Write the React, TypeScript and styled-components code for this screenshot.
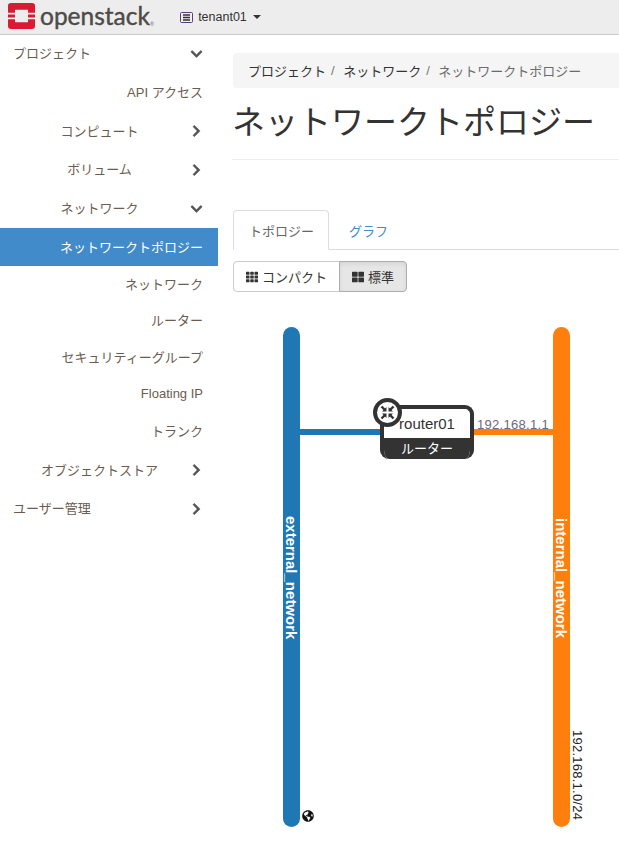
import React from 'react';
import styled, {createGlobalStyle} from 'styled-components';
import {FaChevronDown, FaChevronRight, FaGlobeAmericas, FaTh, FaThLarge} from 'react-icons/fa';

const GlobalStyle = createGlobalStyle`
  html, body {
    margin: 0;
    padding: 0;
    background: #fff;
    overflow: hidden;
  }
  body {
    font-family: "Liberation Sans", "Noto Sans CJK JP", sans-serif;
    font-size: 13px;
    color: #333;
  }
`;

const Page = styled.div`
  width: 619px;
  height: 841px;
  overflow: hidden;
`;

const Navbar = styled.header`
  height: 34px;
  background: #ededed;
  border-bottom: 1px solid #ccc;
  display: flex;
  align-items: center;
  padding-left: 8px;
`;

const LogoIcon = styled.svg`
  margin-bottom: 2px;
`;

const LogoText = styled.span`
  font-family: "Lato", sans-serif;
  font-size: 24.5px;
  color: #4d4a48;
  margin-left: 5px;
  -webkit-text-stroke: 0.4px #4d4a48;
  line-height: 30px;
  padding-bottom: 4px;
`;

const LogoMark = styled.sup`
  font-size: 5px;
  position: relative;
  top: 10px;
  color: #777;
  -webkit-text-stroke: 0;
`;

const Tenant = styled.div`
  display: flex;
  align-items: center;
  margin-left: 26px;
  font-size: 12.5px;
  color: #333;
  gap: 5px;
`;

const Caret = styled.span`
  width: 0;
  height: 0;
  margin-left: 1px;
  border-top: 4px solid #333;
  border-left: 4px solid transparent;
  border-right: 4px solid transparent;
`;

const Body = styled.div`
  display: flex;
`;

const Sidebar = styled.nav`
  width: 218px;
  flex: none;
  margin-top: -1px;
`;

const NavRow = styled.a<{$level: 1 | 2 | 3; $active?: boolean; $h: number}>`
  display: flex;
  align-items: center;
  height: ${p => p.$h}px;
  box-sizing: border-box;
  font-size: 13px;
  color: ${p => (p.$active ? '#fff' : '#6b5c4f')};
  background: ${p => (p.$active ? '#428bca' : 'transparent')};
  position: relative;
  justify-content: ${p => (p.$level === 1 ? 'flex-start' : p.$level === 2 ? 'center' : 'flex-end')};
  padding-bottom: 2px;
  padding-left: ${p => (p.$level === 1 ? '13px' : '0')};
  padding-right: ${p => (p.$level === 1 ? '0' : p.$level === 2 ? '19px' : '15px')};
`;

const Chevron = styled.span`
  position: absolute;
  left: 188px;
  width: 16px;
  top: 50%;
  transform: translateY(-50%);
  display: flex;
  justify-content: center;
  font-size: 13px;
  color: #555;
  svg {
    stroke: currentColor;
    stroke-width: 20px;
  }
`;

const Content = styled.main`
  flex: 1;
  min-width: 0;
  padding: 18px 0 0 15px;
`;

const Breadcrumb = styled.ol`
  list-style: none;
  margin: 0;
  height: 35px;
  padding: 0 0 0 15px;
  background: #f5f5f5;
  border-radius: 4px 0 0 4px;
  display: flex;
  align-items: center;
  font-size: 13px;
  color: #333;
  gap: 5px;
  white-space: nowrap;
`;

const CrumbSep = styled.span`
  color: #777;
  margin-right: 3.5px;
`;

const CrumbLast = styled.li`
  color: #6b6b6b;
`;

const Title = styled.h1`
  margin: 13px 0 0 -1px;
  font-size: 33px;
  font-weight: 400;
  line-height: 43px;
  height: 58px;
  border-bottom: 1px solid #eee;
  color: #333;
  white-space: nowrap;
`;

const Tabs = styled.ul`
  list-style: none;
  margin: 50px 0 0;
  padding: 0;
  display: flex;
  gap: 4px;
  height: 40px;
  box-sizing: border-box;
  border-bottom: 1px solid #ddd;
`;

const Tab = styled.li<{$active?: boolean}>`
  height: 40px;
  box-sizing: border-box;
  display: flex;
  align-items: center;
  padding: 0 ${p => (p.$active ? '14px' : '15px')} 0 15px;
  font-size: 13px;
  border-radius: 4px 4px 0 0;
  color: ${p => (p.$active ? '#666' : '#428bca')};
  background: ${p => (p.$active ? '#fff' : 'transparent')};
  border: 1px solid ${p => (p.$active ? '#ddd' : 'transparent')};
  border-bottom-color: ${p => (p.$active ? '#fff' : 'transparent')};
`;

const ButtonGroup = styled.div`
  display: flex;
  margin-top: 11px;
  height: 31px;
`;

const ToggleButton = styled.button<{$on?: boolean}>`
  height: 31px;
  box-sizing: border-box;
  display: flex;
  align-items: center;
  gap: 4px;
  padding: 0 12px 0 12px;
  font: inherit;
  font-size: 13px;
  color: #333;
  background: ${p => (p.$on ? '#e6e6e6' : '#fff')};
  border: 1px solid ${p => (p.$on ? '#adadad' : '#ccc')};
  box-shadow: ${p => (p.$on ? 'inset 0 2px 4px rgba(0,0,0,.08)' : 'none')};
  border-radius: ${p => (p.$on ? '0 4px 4px 0' : '4px 0 0 4px')};
  margin-left: ${p => (p.$on ? '-1px' : '0')};
  svg {
    font-size: 12px;
  }
`;

const Canvas = styled.div`
  position: relative;
  height: 549px;
`;

const NetworkBar = styled.div<{$color: string; $left: number}>`
  position: absolute;
  left: ${p => p.$left}px;
  top: 35px;
  width: 17px;
  height: 500px;
  border-radius: 9px;
  background: ${p => p.$color};
`;

const NetworkName = styled.span<{$top: number}>`
  position: absolute;
  left: 50%;
  top: ${p => p.$top}px;
  writing-mode: vertical-rl;
  transform: translateX(-50%);
  font-size: 15px;
  font-weight: 700;
  color: #fff;
  white-space: nowrap;
  line-height: 17px;
`;

const Link = styled.div<{$color: string; $left: number; $width: number}>`
  position: absolute;
  left: ${p => p.$left}px;
  width: ${p => p.$width}px;
  top: 137px;
  height: 6px;
  background: ${p => p.$color};
`;

const LinkLabel = styled.span`
  position: absolute;
  left: 244px;
  top: 125px;
  font-size: 13px;
  letter-spacing: 0.3px;
  color: #6a6a78;
  white-space: nowrap;
`;

const CidrLabel = styled.span`
  position: absolute;
  left: 337px;
  top: 438px;
  writing-mode: vertical-rl;
  font-size: 13px;
  letter-spacing: 0.25px;
  line-height: 14px;
  color: #222;
  white-space: nowrap;
`;

const GlobeIcon = styled.span`
  position: absolute;
  left: 69px;
  top: 518px;
  display: flex;
  font-size: 12px;
  color: #111;
`;

const RouterNode = styled.div`
  position: absolute;
  left: 147px;
  top: 113px;
  width: 94px;
  height: 54px;
  box-sizing: border-box;
  border: 4px solid #333;
  border-bottom: 0;
  border-radius: 9px;
  background: #fff;
  display: flex;
  flex-direction: column;
  overflow: hidden;
`;

const RouterName = styled.div`
  flex: 1;
  display: flex;
  align-items: center;
  justify-content: center;
  font-size: 15px;
  color: #333;
`;

const RouterType = styled.div`
  height: 21px;
  background: #333;
  color: #fff;
  font-size: 13px;
  line-height: 21px;
  text-align: center;
`;

const RouterBadge = styled.svg`
  position: absolute;
  left: 140px;
  top: 106px;
  width: 29px;
  height: 29px;
`;

interface IMenu {
    label: string;
    level: 1 | 2 | 3;
    h: number;
    open?: boolean;
    chevron?: boolean;
    active?: boolean;
}

const menu: IMenu[] = [
    {label: 'プロジェクト', level: 1, h: 39, chevron: true, open: true},
    {label: 'API アクセス', level: 3, h: 39},
    {label: 'コンピュート', level: 2, h: 38, chevron: true},
    {label: 'ボリューム', level: 2, h: 39, chevron: true},
    {label: 'ネットワーク', level: 2, h: 39, chevron: true, open: true},
    {label: 'ネットワークトポロジー', level: 3, h: 38, active: true},
    {label: 'ネットワーク', level: 3, h: 36},
    {label: 'ルーター', level: 3, h: 37},
    {label: 'セキュリティーグループ', level: 3, h: 37},
    {label: 'Floating IP', level: 3, h: 37},
    {label: 'トランク', level: 3, h: 37},
    {label: 'オブジェクトストア', level: 2, h: 40, chevron: true},
    {label: 'ユーザー管理', level: 1, h: 37, chevron: true},
];

function Logo() {
    return (
        <LogoIcon width="27" height="26" viewBox="0 0 27 27" preserveAspectRatio="none">
            <path
                fill="#da1a32"
                d="M3 0h21a3 3 0 0 1 3 3v7h-7V7H7v3H0V3a3 3 0 0 1 3-3zM0 12h7v3H0zM20 12h7v3h-7zM0 17h7v3h13v-3h7v7a3 3 0 0 1-3 3H3a3 3 0 0 1-3-3z"
            />
        </LogoIcon>
    );
}

function TenantIcon() {
    return (
        <svg width="13" height="11" viewBox="0 0 13 11">
            <rect x="0.5" y="0.5" width="12" height="10" rx="1" fill="#f1edf4" stroke="#5d3a78" />
            <path d="M3 3h7M3 5.5h7M3 8h7" stroke="#333" strokeWidth="1.3" />
        </svg>
    );
}

export default function App() {
    return (
        <Page>
            <GlobalStyle />
            <Navbar>
                <Logo />
                <LogoText>openstack<LogoMark>®</LogoMark></LogoText>
                <Tenant>
                    <TenantIcon />
                    tenant01
                    <Caret />
                </Tenant>
            </Navbar>
            <Body>
                <Sidebar>
                    {menu.map((item, i) => (
                        <NavRow key={i} $level={item.level} $active={item.active} $h={item.h}>
                            {item.label}
                            {item.chevron && (
                                <Chevron>{item.open ? <FaChevronDown /> : <FaChevronRight />}</Chevron>
                            )}
                        </NavRow>
                    ))}
                </Sidebar>
                <Content>
                    <Breadcrumb>
                        <li>プロジェクト</li>
                        <CrumbSep>/</CrumbSep>
                        <li>ネットワーク</li>
                        <CrumbSep>/</CrumbSep>
                        <CrumbLast>ネットワークトポロジー</CrumbLast>
                    </Breadcrumb>
                    <Title>ネットワークトポロジー</Title>
                    <Tabs>
                        <Tab $active>トポロジー</Tab>
                        <Tab>グラフ</Tab>
                    </Tabs>
                    <ButtonGroup>
                        <ToggleButton><FaTh /> コンパクト</ToggleButton>
                        <ToggleButton $on><FaThLarge /> 標準</ToggleButton>
                    </ButtonGroup>
                    <Canvas>
                        <Link $color="#1f77b4" $left={60} $width={95} />
                        <Link $color="#ff7f0e" $left={235} $width={90} />
                        <NetworkBar $color="#1f77b4" $left={50}>
                            <NetworkName $top={189}>external_network</NetworkName>
                        </NetworkBar>
                        <NetworkBar $color="#ff7f0e" $left={320}>
                            <NetworkName $top={191}>internal_network</NetworkName>
                        </NetworkBar>
                        <LinkLabel>192.168.1.1</LinkLabel>
                        <CidrLabel>192.168.1.0/24</CidrLabel>
                        <GlobeIcon><FaGlobeAmericas /></GlobeIcon>
                        <RouterNode>
                            <RouterName>router01</RouterName>
                            <RouterType>ルーター</RouterType>
                        </RouterNode>
                        <RouterBadge viewBox="0 0 29 29">
                            <circle cx="14.5" cy="14.5" r="12.5" fill="#fff" stroke="#333" strokeWidth="4" />
                            <path
                                stroke="#333"
                                strokeWidth="2.4"
                                fill="none"
                                d="M8.5 8.5l3.5 3.5M20.5 8.5L17 12M8.5 20.5L12 17M20.5 20.5L17 17"
                            />
                            <path
                                fill="#333"
                                d="M13.5 9v4.5H9zM15.5 9v4.5H20zM13.5 20v-4.5H9zM15.5 20v-4.5H20z"
                            />
                        </RouterBadge>
                    </Canvas>
                </Content>
            </Body>
        </Page>
    );
}
